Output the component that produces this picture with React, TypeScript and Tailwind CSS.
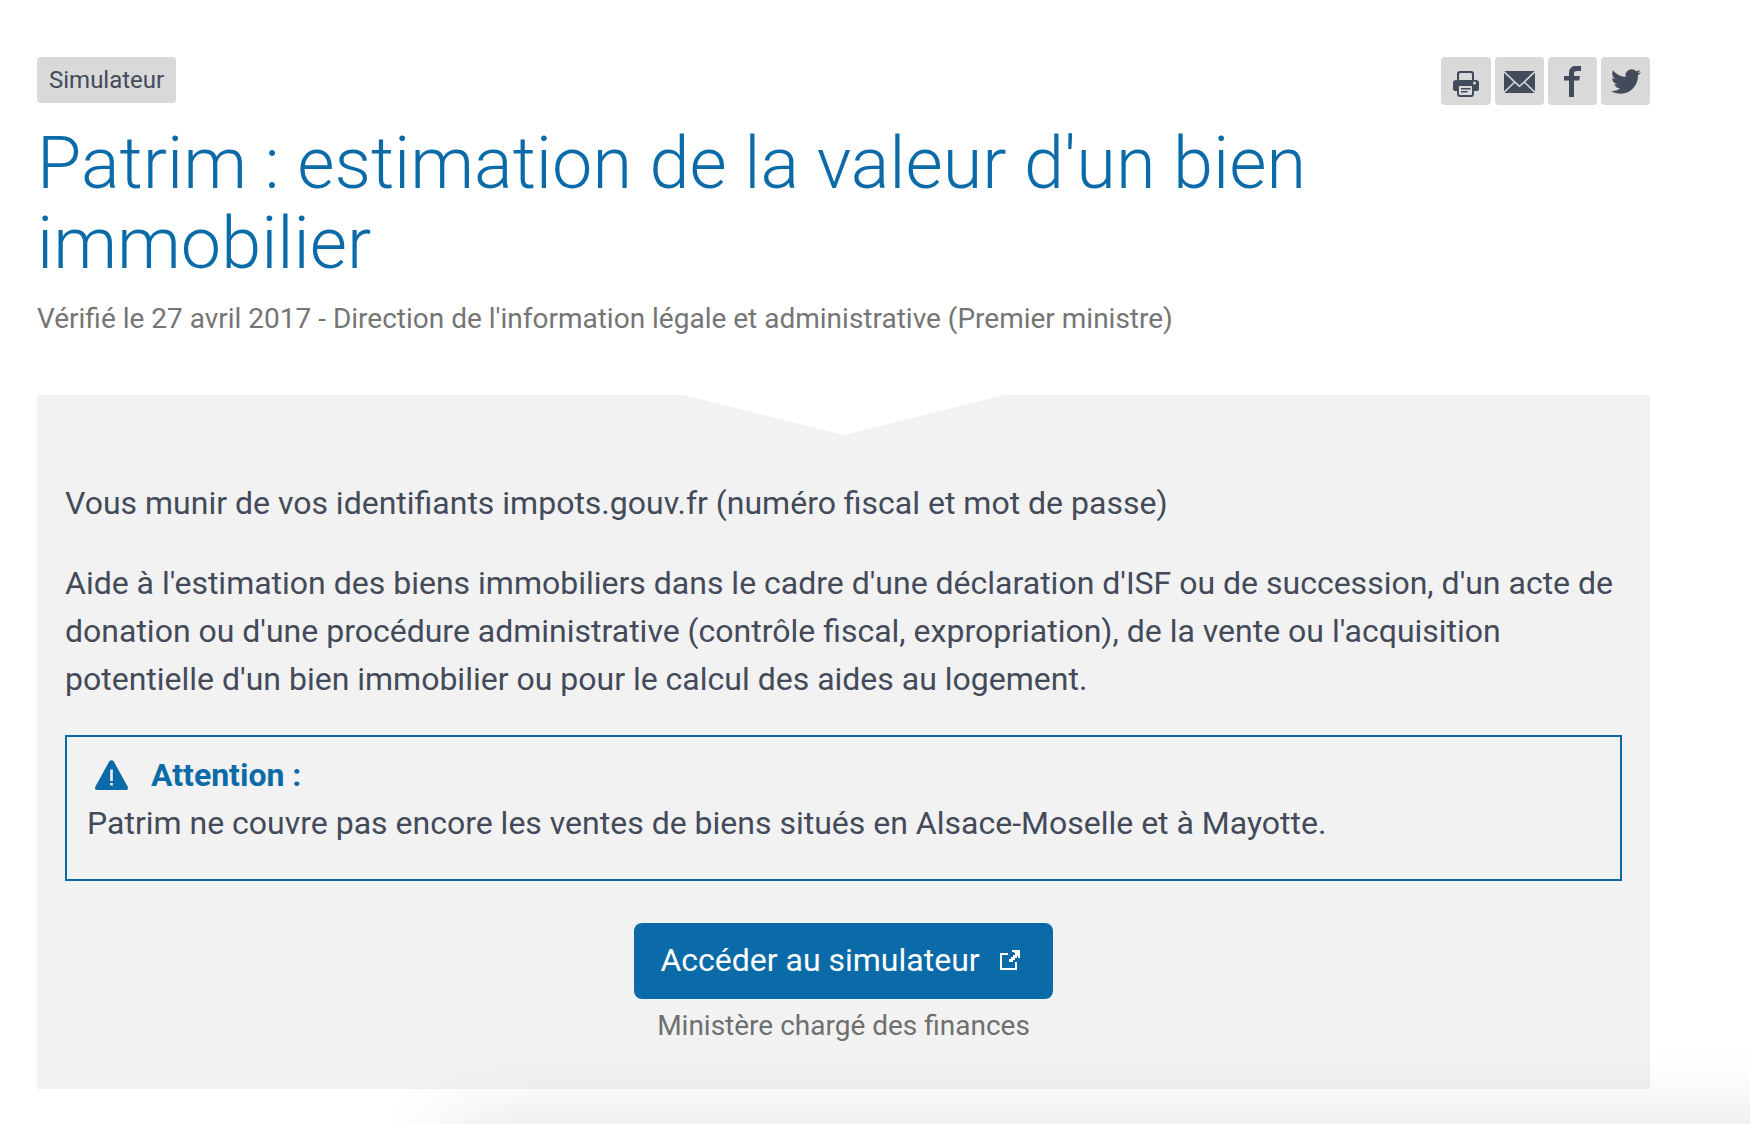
import React from "react";

const tool =
  "flex h-12 w-[49px] items-center justify-center rounded bg-[#d9d9d9] text-[#434a59]";

function PrintIcon() {
  return (
    <svg viewBox="0 0 26 26" className="mt-[6px] h-[26px] w-[26px]" fill="currentColor" aria-hidden="true">
      <path
        fillRule="evenodd"
        d="M4 9V3a3 3 0 0 1 3-3h11a3 3 0 0 1 3 3v6h2a3 3 0 0 1 3 3v6a2 2 0 0 1-2 2h-3v3a3 3 0 0 1-3 3H7a3 3 0 0 1-3-3v-3H2a2 2 0 0 1-2-2V12a3 3 0 0 1 3-3zM6 9h13V3.500A1.500 1.500 0 0 0 17.500 2h-10A1.500 1.500 0 0 0 6 3.500zM6 15v8a1 1 0 0 0 1 1h11a1 1 0 0 0 1-1v-8zM21.500 10.500a1.500 1.500 0 1 0 0 3 1.500 1.500 0 0 0 0-3zM8 17h9.500v1.500H8zM8 20h6.500v1.500H8z"
      />
    </svg>
  );
}

function MailIcon() {
  return (
    <svg viewBox="0 0 31 22" className="mt-[2px] h-[22px] w-[31px]" aria-hidden="true">
      <path fill="currentColor" d="M0 0h31v22H0z" />
      <path
        fill="none"
        stroke="#d9d9d9"
        strokeWidth="1.5"
        d="M0 .6 12.500 12.600 15.500 15.200 18.500 12.600 31 .6M0 21.400l10.800-10.400M31 21.400 20.200 11"
      />
    </svg>
  );
}

function FacebookIcon() {
  return (
    <svg viewBox="0 0 17 31" className="h-[31px] w-[17px]" fill="currentColor" aria-hidden="true">
      <path d="M5 31V14.500H0V10h5V7.500C5 2.500 7.500 0 11.500 0H17v5h-4C10.700 5 10 5.800 10 7.800V10h6l-.8 4.500H10V31z" />
    </svg>
  );
}

function TwitterIcon() {
  return (
    <svg viewBox="0 2 24 20" className="h-[25px] w-[30px]" fill="currentColor" aria-hidden="true">
      <path d="M23.950 4.570a10 10 0 0 1-2.820.77 4.960 4.960 0 0 0 2.160-2.720c-.95.550-2 .95-3.130 1.180a4.920 4.920 0 0 0-8.380 4.480C7.690 8.100 4.070 6.130 1.640 3.160a4.820 4.820 0 0 0-.67 2.480c0 1.710.87 3.210 2.190 4.100a4.900 4.900 0 0 1-2.230-.620v.06a4.920 4.920 0 0 0 3.950 4.830 5 5 0 0 1-2.210.08 4.940 4.940 0 0 0 4.600 3.420A9.870 9.870 0 0 1 0 19.540a14 14 0 0 0 7.550 2.210c9.050 0 14-7.500 14-13.980 0-.21 0-.420-.02-.630a9.940 9.940 0 0 0 2.460-2.550z" />
    </svg>
  );
}

export default function App() {
  return (
    <div className="relative min-h-screen overflow-hidden bg-white font-[Roboto,sans-serif] text-[#434a59]">
      <main className="mr-[100px] ml-[37px] pt-[57px]">
        <header>
          <div className="flex h-[67px] items-start justify-between">
            <span className="rounded bg-[#d9d9d9] px-3 py-[5px] text-2xl leading-9">
              Simulateur
            </span>
            <div className="flex gap-1">
              <button
                type="button"
                aria-label="Imprimer"
                className="flex h-12 w-[50px] items-center justify-center rounded bg-[#d9d9d9] text-[#434a59]"
              >
                <PrintIcon />
              </button>
              <a href="#courriel" aria-label="Envoyer par courriel" className={tool}>
                <MailIcon />
              </a>
              <a href="#facebook" aria-label="Partager sur Facebook" className={tool}>
                <FacebookIcon />
              </a>
              <a href="#twitter" aria-label="Partager sur Twitter" className={tool}>
                <TwitterIcon />
              </a>
            </div>
          </div>
          <h1 className="pr-16 text-[72px] leading-[80px] font-light text-[#0b6ba8]">
            Patrim : estimation de la valeur d'un bien immobilier
          </h1>
          <p className="mt-3 text-[28px] leading-[46px] text-[#757575]">
            Vérifié le 27 avril 2017 - Direction de l'information légale et administrative (Premier
            ministre)
          </p>
        </header>

        <section className="mt-[53px] bg-[#f2f2f2] pb-10">
          <div className="mx-auto h-10 w-80 bg-white [clip-path:polygon(0_0,100%_0,50%_100%)]" />
          <div className="px-7 pt-11 text-[32px] leading-[48px]">
            <p>Vous munir de vos identifiants impots.gouv.fr (numéro fiscal et mot de passe)</p>
            <p className="mt-8">
              Aide à l'estimation des biens immobiliers dans le cadre d'une déclaration d'ISF ou de
              succession, d'un acte de donation ou d'une procédure administrative (contrôle fiscal,
              expropriation), de la vente ou l'acquisition potentielle d'un bien immobilier ou pour
              le calcul des aides au logement.
            </p>
            <div className="mt-8 border-2 border-[#0b6ba8] px-5 pt-[14px] pb-8">
              <h2 className="flex items-center gap-[23px] pl-2 font-bold text-[#0b6ba8]">
                <svg viewBox="0 0 33 30" className="h-[30px] w-[33px]" aria-hidden="true">
                  <path
                    fill="currentColor"
                    d="M14.200 1.500a2.700 2.700 0 0 1 4.600 0L32.600 26.500C33.500 28.300 32.800 30 31 30H2C.2 30-.5 28.300.4 26.500z"
                  />
                  <path fill="#f2f2f2" d="M15.200 9.500h2.600v11.500h-2.600zM15.200 23h2.600v2.500h-2.600z" />
                </svg>
                Attention :
              </h2>
              <p>Patrim ne couvre pas encore les ventes de biens situés en Alsace-Moselle et à Mayotte.</p>
            </div>
            <div className="mt-[42px] flex flex-col items-center">
              <a
                href="#simulateur"
                className="flex items-center gap-5 rounded-lg bg-[#0b6ba8] pt-[13px] pr-[33px] pb-[15px] pl-[26px] text-white"
              >
                Accéder au simulateur
                <svg viewBox="0 0 20 20" className="h-5 w-5" aria-hidden="true">
                  <path fill="none" stroke="currentColor" strokeWidth="2" d="M8 4H1v15h15v-7" />
                  <path
                    fill="currentColor"
                    d="M12 0h8v8h-2V6h-1v2h-2v2h-2v2H9V9h2V7h2V5h2V3h-1V2h-2z"
                  />
                </svg>
              </a>
              <p className="mt-1 text-[28px] leading-[46px] text-[#6f6f6f]">
                Ministère chargé des finances
              </p>
            </div>
          </div>
        </section>
      </main>
      <div className="pointer-events-none absolute top-full -right-40 left-[450px] h-40 shadow-[0_0_80px_rgba(0,0,0,0.12)]" />
    </div>
  );
}
